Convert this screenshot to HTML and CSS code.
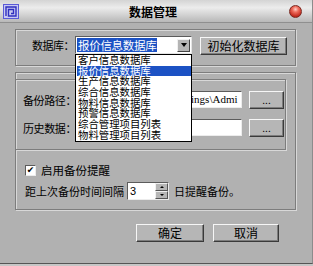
FILE: index.html
```html
<!DOCTYPE html>
<html lang="zh-CN">
<head>
  <meta charset="UTF-8" />
  <title>数据管理</title>
  <link rel="stylesheet" href="styles.css">
</head>
<body>
  <div class="window">
    <div class="titlebar">
      <svg class="app-icon" width="16" height="15" viewBox="0 0 16 15">
        <rect x="0.5" y="0.5" width="15" height="14" fill="#c9c9f2" stroke="#5a5ad8" />
        <path d="M3 12 V3 H13 V12 H5.5 V5.5 H10.5 V9.5 H8" fill="none" stroke="#2f2fc0" stroke-width="1.4" />
      </svg>
      <span class="title">数据管理</span>
      <span class="close"></span>
    </div>

    <div class="content">
      <div class="group db-group">
        <div class="row">
          <span class="label">数据库：</span>
          <div class="combo">
            <span class="combo-value"><span class="sel">报价信息数据库</span></span>
            <span class="combo-arrow"></span>
            <ul class="combo-list">
              <li>客户信息数据库</li>
              <li class="active">报价信息数据库</li>
              <li>生产信息数据库</li>
              <li>综合信息数据库</li>
              <li>物料信息数据库</li>
              <li>预警信息数据库</li>
              <li>综合管理项目列表</li>
              <li>物料管理项目列表</li>
            </ul>
          </div>
          <button class="btn init">初始化数据库</button>
        </div>
      </div>

      <div class="group backup-group">
        <div class="group path-group">
          <div class="path-row">
            <span class="path-label">备份路径：</span>
            <div class="field"><span class="field-text">C:\Documents and Settings\Admi</span></div>
            <button class="btn dots">...</button>
          </div>
          <div class="path-row">
            <span class="path-label">历史数据：</span>
            <div class="field"></div>
            <button class="btn dots">...</button>
          </div>
        </div>

        <div class="check-row">
          <span class="checkbox">✔</span>
          <span>启用备份提醒</span>
        </div>

        <div class="interval-row">
          <span>距上次备份时间间隔</span>
          <div class="spin">
            <span class="spin-value">3</span>
            <span class="spin-btns">
              <span class="spin-up"></span>
              <span class="spin-down"></span>
            </span>
          </div>
          <span class="after">日提醒备份。</span>
        </div>
      </div>

      <div class="actions">
        <button class="btn ok">确定</button>
        <button class="btn cancel">取消</button>
      </div>
    </div>
  </div>
</body>
</html>
```

FILE: styles.css
```css
* { box-sizing: border-box; }
body {
  margin: 0;
  font-family: "Noto Sans CJK SC", sans-serif;
  font-size: 11px;
  color: #000;
  background: #c6c6c6;
}
.window {
  width: 313px;
  height: 264px;
  background: #b1b1b1;
  border-bottom: 1px solid #555;
  border-right: 1px solid #8c8c8c;
}
.titlebar {
  height: 23px;
  display: flex;
  align-items: center;
  padding: 0 10px 0 3px;
  background: linear-gradient(#d4d4d4, #ececec 35%, #d0d0d0 70%, #b8b8b8);
  border-bottom: 1px solid #8f8f8f;
}
.app-icon {
  display: block;
}
.title {
  flex: 1;
  text-align: center;
  font-weight: bold;
  font-size: 12px;
  padding-right: 2px;
}
.close {
  width: 13px;
  height: 13px;
  border-radius: 50%;
  background: radial-gradient(circle at 50% 30%, #ffd0c8 0, #f07060 30%, #c0281c 75%, #8a1a12 100%);
  border: 1px solid #7a2a22;
}
.content {
  padding: 6px 16px 0 15px;
}
.group {
  border: 1px solid #7d7d7d;
  box-shadow: inset 1px 1px 0 #d8d8d8, 1px 1px 0 #d8d8d8;
}
.db-group {
  height: 37px;
  padding: 6px 0 0 16px;
}
.row {
  display: flex;
  align-items: flex-start;
}
.label {
  width: 43px;
  line-height: 18px;
  white-space: nowrap;
  letter-spacing: -0.5px;
}
.combo {
  position: relative;
  width: 117px;
  height: 18px;
  display: flex;
  align-items: center;
  justify-content: space-between;
  background: #fff;
  border: 1px solid;
  border-color: #5c5c5c #e4e4e4 #e4e4e4 #5c5c5c;
  padding: 0 1px;
}
.sel {
  display: block;
  background: #1c52c4;
  color: #fff;
  font-size: 11.5px;
  line-height: 14px;
  padding: 0 1px;
  letter-spacing: -0.3px;
  white-space: nowrap;
}
.combo-arrow {
  width: 13px;
  height: 13px;
  background: #b4b4b4;
  border: 1px solid;
  border-color: #f0f0f0 #444 #444 #f0f0f0;
  display: flex;
  align-items: center;
  justify-content: center;
}
.combo-arrow::after {
  content: "";
  border-left: 3px solid transparent;
  border-right: 3px solid transparent;
  border-top: 4px solid #000;
}
.combo-list {
  position: absolute;
  left: -1px;
  top: 17px;
  width: 117px;
  height: 88px;
  margin: 0;
  padding: 0 0 0 1px;
  list-style: none;
  background: #fff;
  border: 1px solid #000;
  z-index: 2;
}
.combo-list li {
  height: 10.7px;
  line-height: 10.7px;
  font-size: 10.4px;
  padding-left: 1px;
  white-space: nowrap;
}
.combo-list li.active {
  background: #1c52c4;
  color: #fff;
}
.btn {
  font-family: "Noto Sans CJK SC", sans-serif;
  font-size: 12px;
  color: #000;
  background: #b6b6b6;
  border: 1px solid;
  border-color: #f6f6f6 #3a3a3a #3a3a3a #f6f6f6;
  box-shadow: inset -1px -1px 0 #7c7c7c;
  padding: 0;
  height: 18px;
  line-height: 14px;
}
.init {
  width: 87px;
  margin: 1px 0 0 8px;
}
.backup-group {
  height: 138px;
  margin-top: 6px;
}
.path-group {
  width: 271px;
  height: 71px;
  margin: 6px 0 0 -1px;
  padding: 11px 0 0 7px;
}
.path-row {
  display: flex;
  align-items: center;
  height: 17px;
  margin-bottom: 11px;
}
.path-label {
  width: 53px;
  white-space: nowrap;
  letter-spacing: -0.4px;
}
.field {
  width: 166px;
  height: 17px;
  background: #fff;
  border: 1px solid;
  border-color: #5c5c5c #ececec #ececec #5c5c5c;
  overflow: hidden;
  white-space: nowrap;
  font-family: "Liberation Serif", serif;
  font-size: 11px;
  line-height: 15px;
}
.field-text {
  padding-left: 12px;
}
.dots {
  width: 35px;
  margin-left: 7px;
  font-size: 10px;
  line-height: 10px;
}
.check-row {
  display: flex;
  align-items: center;
  height: 12px;
  margin-top: 14px;
  padding-left: 9px;
  font-size: 11.5px;
}
.checkbox {
  width: 11px;
  height: 11px;
  margin-right: 5px;
  background: #fff;
  border: 1px solid;
  border-color: #5c5c5c #ececec #ececec #5c5c5c;
  font-size: 9px;
  line-height: 9px;
  text-align: center;
  font-family: "DejaVu Sans", sans-serif;
}
.interval-row {
  display: flex;
  align-items: center;
  height: 18px;
  margin-top: 6px;
  padding-left: 9px;
  font-size: 11px;
}
.spin {
  width: 42px;
  height: 18px;
  margin-left: 3px;
  display: flex;
  justify-content: space-between;
  background: #fff;
  border: 1px solid;
  border-color: #5c5c5c #ececec #ececec #5c5c5c;
}
.spin-value {
  font-family: "Liberation Sans", sans-serif;
  font-size: 11px;
  line-height: 16px;
  padding-left: 2px;
}
.spin-btns {
  width: 13px;
  display: flex;
  flex-direction: column;
}
.spin-up,
.spin-down {
  flex: 1;
  background: #b6b6b6;
  border: 1px solid;
  border-color: #f0f0f0 #555 #555 #f0f0f0;
  display: flex;
  align-items: center;
  justify-content: center;
}
.spin-up::after {
  content: "";
  border-left: 2px solid transparent;
  border-right: 2px solid transparent;
  border-bottom: 2px solid #000;
}
.spin-down::after {
  content: "";
  border-left: 2px solid transparent;
  border-right: 2px solid transparent;
  border-top: 2px solid #000;
}
.after {
  margin-left: 5px;
}
.actions {
  display: flex;
  justify-content: flex-end;
  gap: 9px;
  margin-top: 14px;
  padding-right: 17px;
}
.ok {
  width: 68px;
}
.cancel {
  width: 66px;
}
```
